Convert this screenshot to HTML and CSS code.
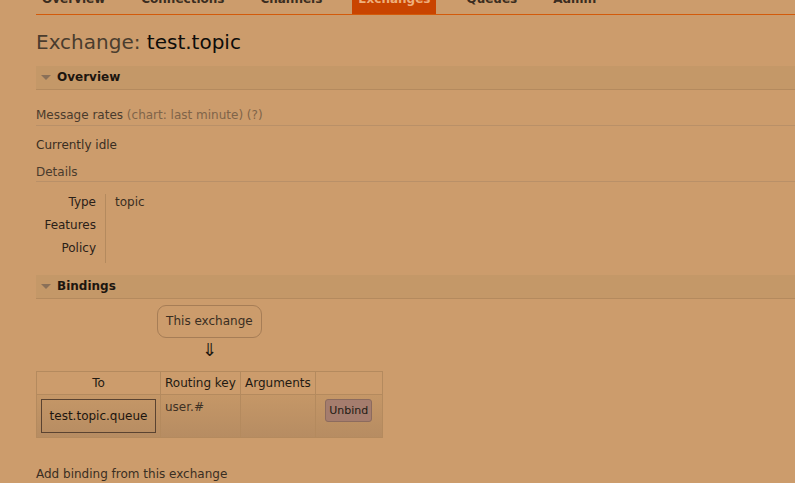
FILE: index.html
```html
<!DOCTYPE html>
<html lang="en">
<head>
  <meta charset="UTF-8">
  <title>RabbitMQ Management: Exchange test.topic</title>
  <link rel="stylesheet" href="styles.css">
</head>
<body>
  <div class="page">
    <nav class="menu">
      <ul>
        <li><a href="#">Overview</a></li>
        <li><a href="#">Connections</a></li>
        <li><a href="#">Channels</a></li>
        <li><a href="#" class="selected">Exchanges</a></li>
        <li><a href="#">Queues</a></li>
        <li><a href="#">Admin</a></li>
      </ul>
    </nav>

    <main class="main">
      <h1>Exchange: <b>test.topic</b></h1>

      <!-- Overview -->
      <section class="section">
        <h2 class="section-title"><span class="toggle"></span>Overview</h2>
        <div class="section-body">
          <h3 class="subhead">Message rates <span class="muted">(chart: last minute) (?)</span></h3>
          <p class="line idle">Currently idle</p>
          <h3 class="subhead details-head">Details</h3>
          <table class="facts">
            <tr><th>Type</th><td>topic</td></tr>
            <tr><th>Features</th><td></td></tr>
            <tr><th>Policy</th><td></td></tr>
          </table>
        </div>
      </section>

      <!-- Bindings -->
      <section class="section">
        <h2 class="section-title"><span class="toggle"></span>Bindings</h2>
        <div class="section-body">
          <div class="bindings">
            <div class="bindings-source">
              <span class="this-exchange">This exchange</span>
              <div class="arrow">&#8659;</div>
            </div>
            <table class="list">
              <thead>
                <tr>
                  <th class="col-to">To</th>
                  <th class="col-key">Routing key</th>
                  <th class="col-args">Arguments</th>
                  <th class="col-act"></th>
                </tr>
              </thead>
              <tbody>
                <tr class="alt1">
                  <td class="col-to"><span class="queue-box">test.topic.queue</span></td>
                  <td>user.#</td>
                  <td></td>
                  <td class="col-act"><button class="button">Unbind</button></td>
                </tr>
              </tbody>
            </table>
          </div>
          <p class="line add-binding">Add binding from this exchange</p>
        </div>
      </section>
    </main>
  </div>
</body>
</html>
```

FILE: styles.css
```css
body {
  font-family: "DejaVu Sans", Verdana, sans-serif;
  font-size: 12px;
  line-height: 16px;
  background-color: #cc9c6c;
  color: #3a2e22;
  margin: 0;
  padding: 0;
  overflow: hidden;
}

.page {
  padding-left: 36px;
  margin-top: -15px;
}

/* top menu, scrolled half out of view */
.menu ul {
  display: flex;
  list-style: none;
  margin: 0;
  padding: 0;
  border-bottom: 1px solid #d35a0a;
}

.menu li {
  margin-right: 24px;
}

.menu a {
  display: block;
  padding: 7px 6px 8px;
  line-height: 14px;
  font-weight: bold;
  color: #3a2c20;
  text-decoration: none;
}

.menu a.selected {
  background-color: #c94400;
  color: #eeae7c;
}

h1 {
  font-size: 20px;
  font-weight: normal;
  line-height: 24px;
  color: #4a3c2e;
  margin: 15px 0 12px;
}

h1 b {
  font-weight: normal;
  color: #0e0c0a;
}

.section-title {
  height: 23px;
  line-height: 23px;
  margin: 0;
  padding-left: 21px;
  position: relative;
  font-size: 12px;
  font-weight: bold;
  color: #1c150f;
  background-color: #c49868;
  border-bottom: 1px solid #b48a5e;
}

.toggle {
  position: absolute;
  left: 5px;
  top: 9px;
  width: 0;
  height: 0;
  border-left: 5px solid transparent;
  border-right: 5px solid transparent;
  border-top: 5px solid #8a7058;
}

.subhead {
  font-size: 12px;
  font-weight: normal;
  margin: 17px 0 0;
  padding-bottom: 2px;
  color: #4a3b2c;
  border-bottom: 1px solid #b99068;
}

.muted {
  color: #806449;
}

.line {
  margin: 11px 0 0;
}

.details-head {
  margin-top: 11px;
  padding-bottom: 1px;
}

.facts {
  border-collapse: collapse;
  margin-top: 12px;
  margin-bottom: 12px;
}

.facts th,
.facts td {
  height: 23px;
  vertical-align: top;
  padding-top: 0;
  padding-bottom: 0;
}

.facts th {
  width: 60px;
  padding-right: 9px;
  padding-left: 0;
  text-align: right;
  font-weight: normal;
  color: #2a2018;
  border-right: 1px solid #b48a5e;
}

.facts td {
  padding-left: 9px;
  color: #3a2e22;
}

/* bindings */
.bindings {
  display: inline-block;
  margin-top: 6px;
}

.bindings-source {
  text-align: center;
}

.this-exchange {
  display: inline-block;
  padding: 7px 8px 8px;
  border: 1px solid #a67d56;
  border-radius: 9px;
  color: #3a2e22;
}

.arrow {
  margin: 4px 0 13px;
  font-size: 18px;
  line-height: 16px;
  color: #1e1810;
}

.list {
  border-collapse: collapse;
  border: 1px solid #b48a5e;
}

.list th {
  height: 22px;
  padding: 0 4px;
  font-weight: normal;
  text-align: left;
  color: #221a12;
  border: 1px solid #b48a5e;
}

.list th.col-to {
  text-align: center;
}

.list td {
  padding: 4px;
  vertical-align: top;
  color: #3e3124;
  border: 1px solid #b48a5e;
}

.list tr.alt1 {
  background: linear-gradient(#c59767, #b68c62);
}

.col-to {
  width: 115px;
}

.col-key {
  width: 71px;
}

.col-args {
  width: 65px;
}

.col-act {
  width: 58px;
  text-align: center;
}

.queue-box {
  display: block;
  padding: 8px 7px;
  border: 1px solid #5a4331;
  color: #1c150e;
  text-align: center;
}

.button {
  font-family: "DejaVu Sans", Verdana, sans-serif;
  font-size: 11px;
  line-height: 14px;
  padding: 4px 3px 3px;
  color: #221a14;
  background-color: #a57d6e;
  border: 1px solid #8c6b5e;
  border-radius: 3px;
  cursor: pointer;
}

.add-binding {
  margin-top: 28px;
}
```
